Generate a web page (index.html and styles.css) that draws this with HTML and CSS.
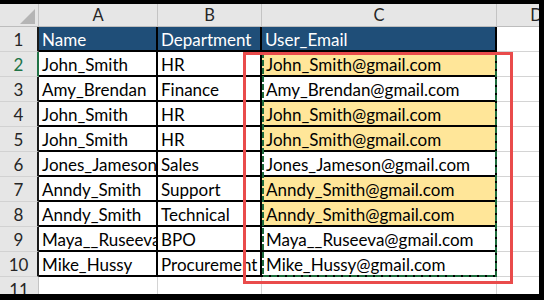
FILE: index.html
```html
<!DOCTYPE html>
<html>
<head>
<meta charset="utf-8">
<link rel="stylesheet" href="styles.css">
</head>
<body>
<div class="frame">
  <div class="sheet">
    <div class="corner"><svg class="tri" width="15" height="15" viewBox="0 0 15 15"><polygon points="15,0 15,15 0,15" fill="#b5b5b5"/></svg></div>
    <div class="ch">A</div><div class="ch">B</div><div class="ch">C</div><div class="ch">D</div>

    <div class="rh">1</div><div class="c h">Name</div><div class="c h">Department</div><div class="c h">User_Email</div><div class="e"></div>
    <div class="rh act">2</div><div class="c">John_Smith</div><div class="c">HR</div><div class="c m y">John_Smith@gmail.com</div><div class="e"></div>
    <div class="rh">3</div><div class="c">Amy_Brendan</div><div class="c">Finance</div><div class="c m">Amy_Brendan@gmail.com</div><div class="e"></div>
    <div class="rh">4</div><div class="c">John_Smith</div><div class="c">HR</div><div class="c m y">John_Smith@gmail.com</div><div class="e"></div>
    <div class="rh">5</div><div class="c">John_Smith</div><div class="c">HR</div><div class="c m y">John_Smith@gmail.com</div><div class="e"></div>
    <div class="rh">6</div><div class="c">Jones_Jameson</div><div class="c">Sales</div><div class="c m">Jones_Jameson@gmail.com</div><div class="e"></div>
    <div class="rh">7</div><div class="c">Anndy_Smith</div><div class="c">Support</div><div class="c m y">Anndy_Smith@gmail.com</div><div class="e"></div>
    <div class="rh">8</div><div class="c">Anndy_Smith</div><div class="c">Technical</div><div class="c m y">Anndy_Smith@gmail.com</div><div class="e"></div>
    <div class="rh">9</div><div class="c">Maya__Ruseeva</div><div class="c">BPO</div><div class="c m">Maya__Ruseeva@gmail.com</div><div class="e"></div>
    <div class="rh">10</div><div class="c">Mike_Hussy</div><div class="c">Procurement</div><div class="c m">Mike_Hussy@gmail.com</div><div class="e"></div>
    <div class="rh last">11</div><div class="e"></div><div class="e"></div><div class="e"></div><div class="e"></div>
  </div>

  <svg class="ants" width="539" height="290" viewBox="0 0 539 290">
    <path d="M263 48 V272 H496 V48" fill="none" stroke="#1d6b3c" stroke-width="2" stroke-dasharray="6 2"/>
    <line x1="262" y1="48.5" x2="497" y2="48.5" stroke="#ffffff" stroke-width="1" stroke-dasharray="2 3"/>
  </svg>
  <div class="redbox"></div>
</div>
</body>
</html>
```

FILE: styles.css
```css
html, body {
  margin: 0;
  padding: 0;
  background: #000;
}

.frame {
  position: relative;
  margin: 4px 5px 0 0;
  width: 539px;
  height: 290px;
  overflow: hidden;
  background: #fff;
  font-family: "Lato", "Liberation Sans", sans-serif;
  font-size: 17px;
  color: #000;
}

.sheet {
  display: grid;
  grid-template-columns: 39px 119px 104px 235px 80px;
  grid-template-rows: 23px repeat(10, 25px) 25px;
}

.sheet > div {
  box-sizing: border-box;
  overflow: hidden;
  white-space: nowrap;
}

.corner {
  background: #e6e6e6;
  border-right: 1px solid #c4c4c4;
  border-bottom: 1px solid #bdbdbd;
}

.tri {
  display: block;
  margin: 5px 0 0 20px;
}

.ch {
  background: #e6e6e6;
  border-right: 1px solid #c4c4c4;
  border-bottom: 1px solid #bdbdbd;
  display: flex;
  align-items: center;
  justify-content: center;
  font-size: 16.5px;
  line-height: 16px;
  color: #262626;
}

.rh {
  background: #e6e6e6;
  border-right: 2px solid #1a1a1a;
  border-bottom: 1px solid #d2d2d2;
  text-align: center;
  line-height: 21px;
  padding-top: 2px;
  color: #262626;
}

.rh.act {
  color: #217346;
  border-right-color: #217346;
}

.rh.last {
  border-right: 1px solid #c4c4c4;
}

.c {
  border-right: 2px solid #000;
  border-bottom: 2px solid #000;
  padding: 2px 0 0 3px;
  line-height: 21px;
}

.c.m {
  padding-left: 4px;
}

.c.h {
  background: #1f4e78;
  color: #fff;
}

.c.y {
  background: #ffe699;
}

.e {
  border-right: 1px solid #d4d4d4;
  border-bottom: 1px solid #d4d4d4;
}

.ants {
  position: absolute;
  left: 0;
  top: 0;
  pointer-events: none;
}

.redbox {
  position: absolute;
  left: 243px;
  top: 48px;
  width: 270px;
  height: 232px;
  box-sizing: border-box;
  border: 3px solid #e94b4b;
  pointer-events: none;
}
```
